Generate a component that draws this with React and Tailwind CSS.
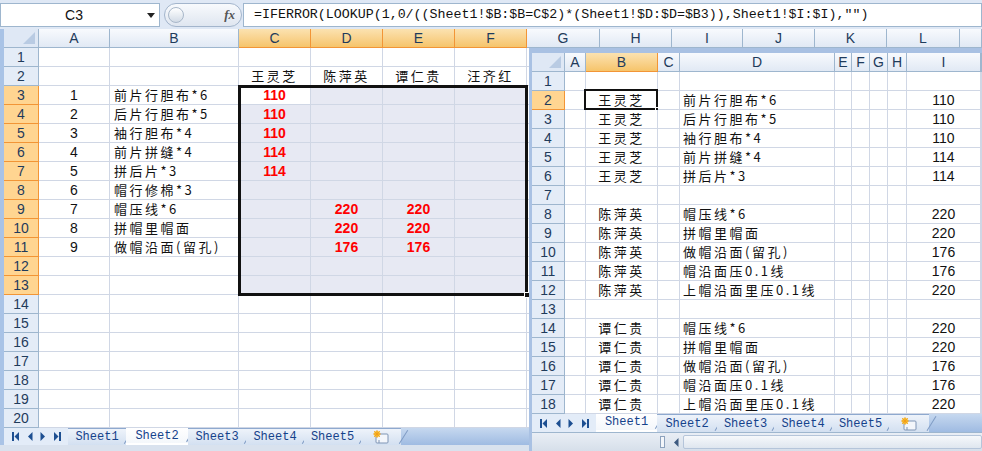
import React from "react";

const CJK = "font-['Noto_Sans_CJK_SC',sans-serif] text-[13px] tracking-[2.5px] text-[#111]";
const NUM = "font-['Liberation_Sans',sans-serif] text-[14px] text-[#111]";
const RED = "font-['Liberation_Sans',sans-serif] text-[14px] font-bold text-[#ff0000]";

const LEFT_COLS = ["A", "B", "C", "D", "E", "F", "G", "H", "I", "J", "K", "L", ""];
const LEFT_SEL_COLS = ["C", "D", "E", "F"];

// row -> { col: [text, kind] }
const LEFT_DATA = {
  2: { C: ["王灵芝", "cjkc"], D: ["陈萍英", "cjkc"], E: ["谭仁贵", "cjkc"], F: ["汪齐红", "cjkc"] },
  3: { A: ["1", "num"], B: ["前片行胆布*6", "cjk"], C: ["110", "red"] },
  4: { A: ["2", "num"], B: ["后片行胆布*5", "cjk"], C: ["110", "red"] },
  5: { A: ["3", "num"], B: ["袖行胆布*4", "cjk"], C: ["110", "red"] },
  6: { A: ["4", "num"], B: ["前片拼缝*4", "cjk"], C: ["114", "red"] },
  7: { A: ["5", "num"], B: ["拼后片*3", "cjk"], C: ["114", "red"] },
  8: { A: ["6", "num"], B: ["帽行修棉*3", "cjk"] },
  9: { A: ["7", "num"], B: ["帽压线*6", "cjk"], D: ["220", "red"], E: ["220", "red"] },
  10: { A: ["8", "num"], B: ["拼帽里帽面", "cjk"], D: ["220", "red"], E: ["220", "red"] },
  11: { A: ["9", "num"], B: ["做帽沿面(留孔)", "cjk"], D: ["176", "red"], E: ["176", "red"] },
};

const RIGHT_COLS = ["A", "B", "C", "D", "E", "F", "G", "H", "I", ""];
const RIGHT_DATA = [
  null,
  ["王灵芝", "前片行胆布*6", "110"],
  ["王灵芝", "后片行胆布*5", "110"],
  ["王灵芝", "袖行胆布*4", "110"],
  ["王灵芝", "前片拼缝*4", "114"],
  ["王灵芝", "拼后片*3", "114"],
  null,
  ["陈萍英", "帽压线*6", "220"],
  ["陈萍英", "拼帽里帽面", "220"],
  ["陈萍英", "做帽沿面(留孔)", "176"],
  ["陈萍英", "帽沿面压0.1线", "176"],
  ["陈萍英", "上帽沿面里压0.1线", "220"],
  null,
  ["谭仁贵", "帽压线*6", "220"],
  ["谭仁贵", "拼帽里帽面", "220"],
  ["谭仁贵", "做帽沿面(留孔)", "176"],
  ["谭仁贵", "帽沿面压0.1线", "176"],
  ["谭仁贵", "上帽沿面里压0.1线", "220"],
];

function ColHead({ label, selected }) {
  return (
    <div
      className={
        selected
          ? "flex items-center justify-center border-r border-b border-[#F29536] bg-gradient-to-b from-[#FBE2B0] to-[#F6C46A] font-['Liberation_Sans',sans-serif] text-[14px] text-[#1f3b5b]"
          : "flex items-center justify-center border-r border-b border-[#9EB6CE] bg-gradient-to-b from-[#F8FAFD] to-[#E1E9F4] font-['Liberation_Sans',sans-serif] text-[14px] text-[#1f3b5b]"
      }
    >
      {label}
    </div>
  );
}

function RowHead({ n, selected }) {
  return (
    <div
      className={
        selected
          ? "flex items-center justify-center border-r border-b border-[#F29536] bg-[#FFD591] font-['Liberation_Sans',sans-serif] text-[14px] text-[#1f3b5b]"
          : "flex items-center justify-center border-r border-b border-[#9EB6CE] bg-[#E4ECF7] font-['Liberation_Sans',sans-serif] text-[14px] text-[#1f3b5b]"
      }
    >
      {n}
    </div>
  );
}

function Content({ item }) {
  if (!item) return null;
  const [text, kind] = item;
  if (kind === "red") return <span className={RED}>{text}</span>;
  if (kind === "num") return <span className={NUM}>{text}</span>;
  return <span className={CJK}>{text}</span>;
}

function NavArrows() {
  return (
    <div className="flex h-full w-[64px] items-center justify-around px-[4px] text-[#1d4f91]">
      <svg width="8" height="9" viewBox="0 0 8 9"><rect x="0" y="0" width="2" height="9" fill="currentColor" /><path d="M7 0 L2.5 4.5 L7 9 Z" fill="currentColor" /></svg>
      <svg width="6" height="9" viewBox="0 0 6 9"><path d="M5.5 0 L1 4.5 L5.5 9 Z" fill="currentColor" /></svg>
      <svg width="6" height="9" viewBox="0 0 6 9"><path d="M0.5 0 L5 4.5 L0.5 9 Z" fill="currentColor" /></svg>
      <svg width="8" height="9" viewBox="0 0 8 9"><path d="M1 0 L5.5 4.5 L1 9 Z" fill="currentColor" /><rect x="6" y="0" width="2" height="9" fill="currentColor" /></svg>
    </div>
  );
}

function NewSheetIcon() {
  return (
    <svg width="18" height="14" viewBox="0 0 18 14">
      <rect x="4" y="4" width="12" height="9" rx="1" fill="#f3f6fb" stroke="#7f95b5" />
      <path d="M7 13 L7 10" stroke="#7f95b5" />
      <circle cx="5" cy="4" r="3" fill="#f7c430" />
      <path d="M5 0 L5 8 M1 4 L9 4 M2 1 L8 7 M8 1 L2 7" stroke="#f29a1a" strokeWidth="0.8" />
    </svg>
  );
}

function TabStrip({ active, widths }) {
  const names = ["Sheet1", "Sheet2", "Sheet3", "Sheet4", "Sheet5"];
  return (
    <div className="flex h-full items-stretch">
      {names.map((name, i) => (
        <div
          key={name}
          style={{ width: widths[i] }}
          className={
            i === active
              ? "relative flex items-center justify-center border-b-2 border-[#ffffff] bg-gradient-to-b from-[#ffffff] to-[#f4f7fb] font-['Liberation_Mono',monospace] text-[12px] text-[#15428b]"
              : "relative flex items-center justify-center border-t border-[#8ea9cf] bg-gradient-to-b from-[#eef3fa] to-[#d3e0f1] font-['Liberation_Mono',monospace] text-[12px] text-[#15428b]"
          }
        >
          {name}
          <div className="absolute right-[-3px] top-0 h-full w-[1px] rotate-[32deg] bg-[#7f9bc4]" />
        </div>
      ))}
      <div className="relative flex w-[40px] items-center justify-center border-t border-[#8ea9cf] bg-gradient-to-b from-[#eef3fa] to-[#d3e0f1]">
        <NewSheetIcon />
        <div className="absolute right-[-3px] top-0 h-full w-[1px] rotate-[32deg] bg-[#7f9bc4]" />
      </div>
    </div>
  );
}

function LeftSheet() {
  const rows = Array.from({ length: 20 }, (_, i) => i + 1);
  return (
    <div className="relative">
      <div className="grid grid-cols-[35px_71px_129px_72px_72px_72px_72px_73px_72px_71px_72px_72px_73px_1fr] auto-rows-[19px]">
        <div className="relative border-r border-b border-[#9EB6CE] bg-[#dfe8f5]">
          <svg className="absolute bottom-[3px] right-[3px]" width="12" height="12" viewBox="0 0 12 12"><path d="M12 0 L12 12 L0 12 Z" fill="#b9cbe3" /></svg>
        </div>
        {LEFT_COLS.map((c, i) => (
          <ColHead key={i} label={c} selected={LEFT_SEL_COLS.includes(c)} />
        ))}
        {rows.map((r) => (
          <React.Fragment key={r}>
            <RowHead n={r} selected={r >= 3 && r <= 13} />
            {LEFT_COLS.map((c, i) => {
              const inSel = r >= 3 && r <= 13 && LEFT_SEL_COLS.includes(c) && !(r === 3 && c === "C");
              const item = LEFT_DATA[r] && LEFT_DATA[r][c];
              const left = c === "B";
              return (
                <div
                  key={i}
                  className={
                    (inSel ? "bg-[#E7E9F3] " : "bg-white ") +
                    (left ? "flex items-center justify-start pl-[4px] " : "flex items-center justify-center ") +
                    "overflow-visible whitespace-nowrap border-r border-b border-[#D0D7E5]"
                  }
                >
                  <Content item={item} />
                </div>
              );
            })}
          </React.Fragment>
        ))}
      </div>
      {/* selection border C3:F13 */}
      <div className="pointer-events-none absolute left-[234px] top-[56px] h-[211px] w-[290px] border-[3px] border-[#111]" />
      <div className="pointer-events-none absolute left-[520px] top-[263px] h-[6px] w-[6px] border border-white bg-[#111]" />
    </div>
  );
}

function RightWindow() {
  const rows = Array.from({ length: 18 }, (_, i) => i + 1);
  return (
    <div className="absolute left-[529px] top-[48px] flex h-[403px] w-[453px] flex-col border-l-[3px] border-t-[5px] border-[#A9C1E3] bg-white">
      <div className="grid grid-cols-[33px_21px_72px_22px_155px_17px_18px_18px_19px_74px_1fr] auto-rows-[19px]">
        <div className="relative border-r border-b border-[#9EB6CE] bg-[#dfe8f5]">
          <svg className="absolute bottom-[3px] right-[3px]" width="12" height="12" viewBox="0 0 12 12"><path d="M12 0 L12 12 L0 12 Z" fill="#b9cbe3" /></svg>
        </div>
        {RIGHT_COLS.map((c, i) => (
          <ColHead key={i} label={c} selected={c === "B"} />
        ))}
        {rows.map((r) => {
          const d = RIGHT_DATA[r - 1];
          return (
            <React.Fragment key={r}>
              <RowHead n={r} selected={r === 2} />
              {RIGHT_COLS.map((c, i) => {
                let content = null;
                let cls = "flex items-center justify-center";
                if (d && c === "B") content = <span className={CJK}>{d[0]}</span>;
                if (d && c === "D") {
                  content = <span className={CJK}>{d[1]}</span>;
                  cls = "flex items-center justify-start pl-[3px]";
                }
                if (d && c === "I") content = <span className={NUM}>{d[2]}</span>;
                const active = r === 2 && c === "B";
                return (
                  <div
                    key={i}
                    className={
                      cls +
                      " relative overflow-visible whitespace-nowrap border-r border-b border-[#D0D7E5] bg-white"
                    }
                  >
                    {content}
                    {active && (
                      <>
                        <div className="pointer-events-none absolute left-[-2px] top-[-2px] h-[21px] w-[74px] border-2 border-[#111]" />
                        <div className="pointer-events-none absolute bottom-[-4px] right-[-4px] h-[6px] w-[6px] border border-white bg-[#111]" />
                      </>
                    )}
                  </div>
                );
              })}
            </React.Fragment>
          );
        })}
      </div>
      {/* tabs */}
      <div className="flex h-[18px] items-stretch bg-gradient-to-b from-[#c6d8ef] to-[#9fbbe2]">
        <div className="bg-[#e3ecf8]">
          <NavArrows />
        </div>
        <TabStrip active={0} widths={[61, 60, 57, 58, 57]} />
      </div>
      {/* horizontal scrollbar */}
      <div className="flex flex-1 items-stretch border-t border-[#9EB6CE] bg-gradient-to-b from-[#e9eef5] to-[#d6dfea]">
        <div className="w-[128px]" />
        <div className="my-[3px] flex w-[5px] items-center justify-center border border-[#8da2bd] bg-[#f3f6fa]" />
        <div className="ml-[4px] my-[2px] flex w-[14px] items-center justify-center text-[#3d5a80]">
          <svg width="6" height="9" viewBox="0 0 6 9"><path d="M5.5 0 L1 4.5 L5.5 9 Z" fill="currentColor" /></svg>
        </div>
        <div className="my-[2px] flex-1 rounded-[2px] border border-[#b5c5da] bg-gradient-to-b from-[#f6f8fb] to-[#dfe6ef]" />
      </div>
    </div>
  );
}

export default function App() {
  return (
    <div className="relative h-[451px] w-[982px] overflow-hidden bg-[#dfe8f5]">
      {/* formula bar */}
      <div className="flex h-[29px] items-stretch pt-[3px] pb-[2px]">
        <div className="relative flex w-[160px] items-center border border-[#9EB6CE] bg-white">
          <span className="w-[146px] text-center font-['Liberation_Sans',sans-serif] text-[14px] text-[#111]">C3</span>
          <svg width="8" height="5" viewBox="0 0 8 5"><path d="M0 0 L8 0 L4 5 Z" fill="#222" /></svg>
        </div>
        <div className="relative ml-[4px] flex w-[78px] items-center rounded-full border border-[#a3b5cc] bg-gradient-to-b from-[#f8fafd] to-[#dfe6f0]">
          <div className="ml-[3px] h-[16px] w-[16px] rounded-full border border-[#a8b7c9] bg-gradient-to-b from-[#ffffff] to-[#d2dbe6]" />
          <span className="ml-auto mr-[6px] font-['Liberation_Serif',serif] text-[13px] font-bold italic text-[#555]">fx</span>
        </div>
        <div className="ml-[1px] flex flex-1 items-center border border-[#9EB6CE] bg-white pl-[10px] font-['Liberation_Mono',monospace] text-[13.3px] text-[#111]">
          =IFERROR(LOOKUP(1,0/((Sheet1!$B:$B=C$2)*(Sheet1!$D:$D=$B3)),Sheet1!$I:$I),"")
        </div>
      </div>
      {/* main sheet */}
      <div className="flex">
        <div className="w-[4px] bg-[#a9c3e6]" />
        <div className="flex-1">
          <LeftSheet />
        </div>
      </div>
      {/* left tab bar */}
      <div className="flex h-[17px] items-stretch bg-gradient-to-b from-[#c6d8ef] to-[#9fbbe2]">
        <div className="w-[4px] bg-[#a9c3e6]" />
        <div className="bg-[#e3ecf8]">
          <NavArrows />
        </div>
        <TabStrip active={1} widths={[58, 62, 58, 58, 57]} />
      </div>
      <div className="h-[6px] bg-[#d9e2ee]" />
      <RightWindow />
    </div>
  );
}
